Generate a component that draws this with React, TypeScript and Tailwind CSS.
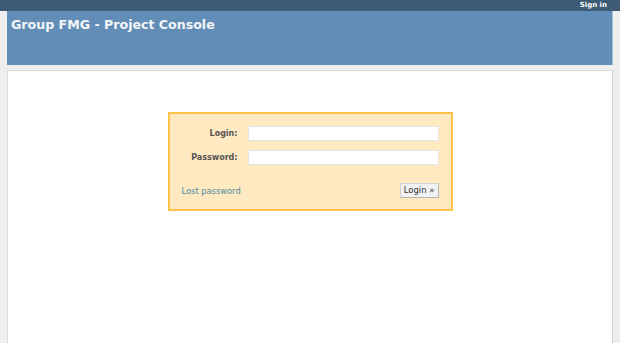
import React from 'react';

export default function App() {
  return (
    <div
      className="w-[620px] h-[343px] overflow-hidden bg-[#eeeeee] text-[#484848]"
      style={{ fontFamily: '"DejaVu Sans", Verdana, sans-serif' }}
    >
      {/* top menu */}
      <div className="h-[11px] bg-[#3e5b76] flex items-center justify-end pr-[13px]">
        <a className="text-[7px] font-bold text-white leading-none">Sign in</a>
      </div>

      <div className="px-[7px]">
        {/* header */}
        <div className="h-[54px] bg-[#628db6] border-r border-[#a7bfd8] pl-[4px] pt-[5px]">
          <h1 className="text-[12.6px] leading-[18px] text-[#f4f6f8] font-bold">
            Group FMG - Project Console
          </h1>
        </div>

        {/* main content */}
        <div className="mt-[5px] h-[280px] bg-white border border-[#dddddd] border-r-[#cfcfcf] flex justify-center pt-[41px]">
          <div className="w-[285px] h-[99px] bg-[#ffe9c1] border-2 border-[#fdc24a] flex flex-col px-[12px] pt-[11px]">
            <div className="flex items-center h-[17px]">
              <label className="w-[57px] text-right text-[8px] font-bold text-[#555]">Login:</label>
              <input className="ml-[10px] w-[191px] h-[15px] bg-white border border-[#e4e4e4] outline-none" />
            </div>
            <div className="flex items-center h-[17px] mt-[7px]">
              <label className="w-[57px] text-right text-[8px] font-bold text-[#555]">Password:</label>
              <input type="password" className="ml-[10px] w-[191px] h-[15px] bg-white border border-[#e4e4e4] outline-none" />
            </div>
            <div className="flex items-center justify-between mt-[17px]">
              <a className="text-[8.3px] text-[#4a8aa3] mt-[2px]">Lost password</a>
              <button className="h-[15px] px-[3px] text-[8.5px] leading-none text-[#333] bg-[#f1f1f1] border border-[#d2d2d2] border-b-[#b5b5b5] border-r-[#b5b5b5]">
                Login »
              </button>
            </div>
          </div>
        </div>
      </div>
    </div>
  );
}
